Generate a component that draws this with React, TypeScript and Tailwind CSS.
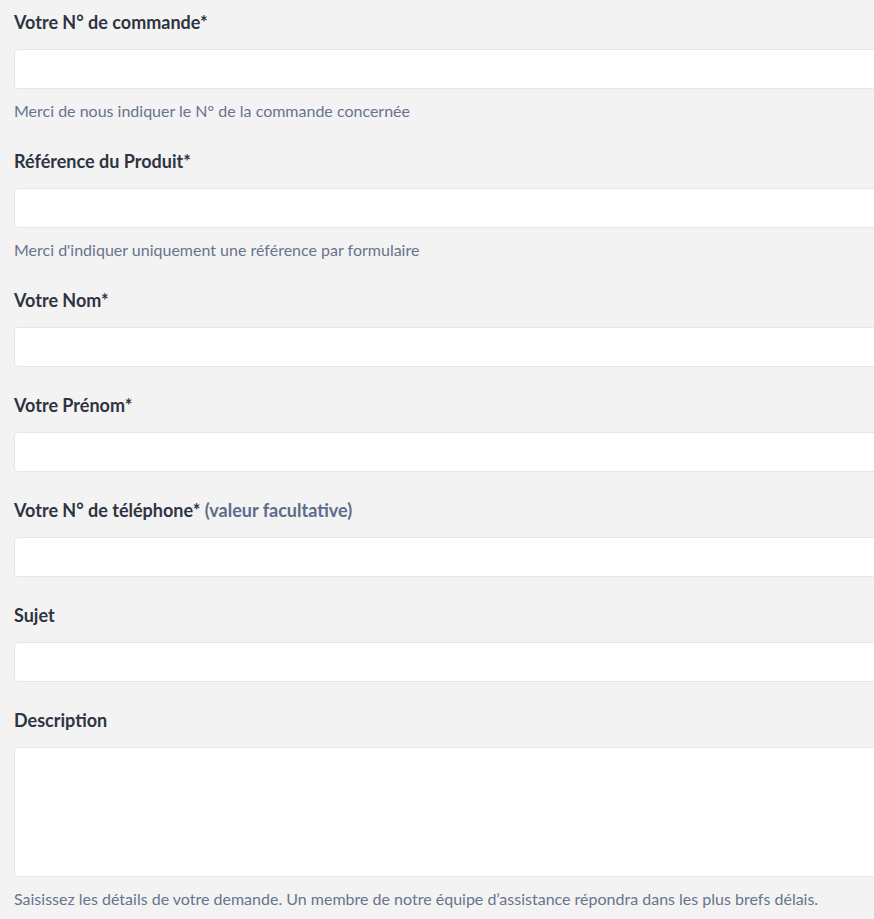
import React from "react";

const Field = ({
  label,
  extra,
  helper,
  textarea,
}: {
  label: string;
  extra?: string;
  helper?: string;
  textarea?: boolean;
}) => (
  <div className="mb-[26px]">
    <label className="block text-[18px] leading-[24px] font-bold text-[#2f3441] mb-[15px]">
      {label}
      {extra && <span className="text-[#5f6b8a]"> {extra}</span>}
    </label>
    {textarea ? (
      <textarea className="block w-[900px] h-[130px] bg-white border border-[#e6e6e6] rounded-[4px] resize-none outline-none" />
    ) : (
      <input className="block w-[900px] h-[40px] bg-white border border-[#e6e6e6] rounded-[4px] outline-none" />
    )}
    {helper && (
      <p className="mt-[9px] text-[16px] leading-[25px] text-[#68738d]">{helper}</p>
    )}
  </div>
);

export default function App() {
  return (
    <div
      className="w-full min-h-[919px] bg-[#f3f3f3] overflow-hidden pl-[14px] pt-[10px]"
      style={{ fontFamily: "Lato, 'Noto Sans', sans-serif" }}
    >
      <Field label="Votre N° de commande*" helper="Merci de nous indiquer le N° de la commande concernée" />
      <Field label="Référence du Produit*" helper="Merci d'indiquer uniquement une référence par formulaire" />
      <Field label="Votre Nom*" />
      <Field label="Votre Prénom*" />
      <Field label="Votre N° de téléphone*" extra="(valeur facultative)" />
      <Field label="Sujet" />
      <Field
        label="Description"
        textarea
        helper="Saisissez les détails de votre demande. Un membre de notre équipe d’assistance répondra dans les plus brefs délais."
      />
    </div>
  );
}
